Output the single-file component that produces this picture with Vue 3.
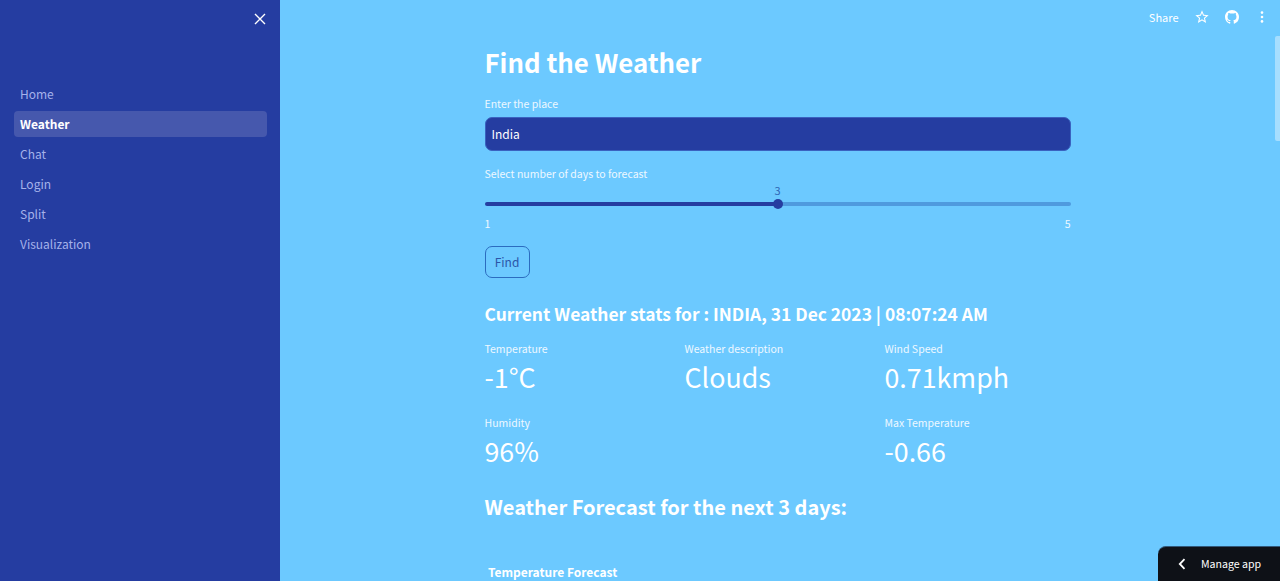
<template>
  <div class="app">
    <aside class="sidebar">
      <div class="side-top">
        <svg class="close" viewBox="0 0 12 12" width="12" height="12">
          <path d="M1 1l10 10M11 1L1 11" stroke="#fff" stroke-width="1.4" fill="none" />
        </svg>
      </div>
      <nav class="nav">
        <a
          v-for="item in navItems"
          :key="item"
          class="nav-item"
          :class="{ active: item === 'Weather' }"
        >{{ item }}</a>
      </nav>
    </aside>

    <main class="main">
      <header class="toolbar">
        <span class="share">Share</span>
        <svg class="star" viewBox="0 0 24 24" width="16" height="16" fill="#fff">
          <path d="M22 9.24l-7.19-.62L12 2 9.19 8.63 2 9.24l5.46 4.73L5.82 21 12 17.27 18.18 21l-1.63-7.03L22 9.24zM12 15.4l-3.76 2.27 1-4.28-3.32-2.88 4.38-.38L12 6.1l1.71 4.04 4.38.38-3.32 2.88 1 4.28L12 15.4z" />
        </svg>
        <svg class="github" viewBox="0 0 16 16" width="14" height="14" fill="#fff">
          <path d="M8 0C3.58 0 0 3.58 0 8c0 3.54 2.29 6.53 5.47 7.59.4.07.55-.17.55-.38 0-.19-.01-.82-.01-1.49-2.01.37-2.53-.49-2.69-.94-.09-.23-.48-.94-.82-1.13-.28-.15-.68-.52-.01-.53.63-.01 1.08.58 1.23.82.72 1.21 1.87.87 2.33.66.07-.52.28-.87.51-1.07-1.78-.2-3.64-.89-3.64-3.95 0-.87.31-1.59.82-2.15-.08-.2-.36-1.02.08-2.12 0 0 .67-.21 2.2.82.64-.18 1.32-.27 2-.27.68 0 1.36.09 2 .27 1.53-1.04 2.2-.82 2.2-.82.44 1.1.16 1.92.08 2.12.51.56.82 1.27.82 2.15 0 3.07-1.87 3.75-3.65 3.95.29.25.54.73.54 1.48 0 1.07-.01 1.93-.01 2.2 0 .21.15.46.55.38A8.013 8.013 0 0016 8c0-4.42-3.58-8-8-8z" />
        </svg>
        <svg class="kebab" viewBox="0 0 4 12" width="4" height="12" fill="#fff">
          <circle cx="2" cy="1.6" r="1.3" />
          <circle cx="2" cy="6" r="1.3" />
          <circle cx="2" cy="10.4" r="1.3" />
        </svg>
      </header>

      <div class="content">
        <h1 class="title">Find the Weather</h1>

        <label class="label first">Enter the place</label>
        <div class="input">India</div>

        <label class="label days">Select number of days to forecast</label>
        <div class="slider">
          <span class="slider-value" :style="{ left: pct + '%' }">{{ days }}</span>
          <div class="track">
            <div class="track-fill" :style="{ width: pct + '%' }"></div>
            <div class="track-rest"></div>
          </div>
          <span class="thumb" :style="{ left: pct + '%' }"></span>
        </div>
        <div class="ticks"><span>1</span><span>5</span></div>

        <button class="find">Find</button>

        <h3 class="heading">Current Weather stats for : INDIA, 31 Dec 2023 | 08:07:24 AM</h3>

        <div class="metrics">
          <div v-for="m in metrics" :key="m.label" class="metric" :class="m.cls">
            <div class="metric-label">{{ m.label }}</div>
            <div class="metric-value">{{ m.value }}</div>
          </div>
        </div>

        <h3 class="heading forecast">Weather Forecast for the next {{ days }} days:</h3>

        <div class="chart-title">Temperature Forecast</div>
      </div>

      <div class="scroll-thumb"></div>

      <div class="manage">
        <svg viewBox="0 0 8 12" width="8" height="12">
          <path d="M6.5 1.2L1.8 6l4.7 4.8" stroke="#fff" stroke-width="1.8" fill="none" />
        </svg>
        <span>Manage app</span>
      </div>
    </main>
  </div>
</template>

<script setup>
const navItems = ['Home', 'Weather', 'Chat', 'Login', 'Split', 'Visualization']

const days = 3
const pct = ((days - 1) / 4) * 100

const metrics = [
  { label: 'Temperature', value: '-1°C' },
  { label: 'Weather description', value: 'Clouds' },
  { label: 'Wind Speed', value: '0.71kmph' },
  { label: 'Humidity', value: '96%' },
  { label: 'Max Temperature', value: '-0.66', cls: 'col3' }
]
</script>

<style scoped>
.app {
  display: flex;
  height: 100vh;
  overflow: hidden;
  font-family: "Noto Sans CJK SC", "Noto Sans", sans-serif;
  color: #fff;
}

/* SIDEBAR */
.sidebar {
  width: 280px;
  flex-shrink: 0;
  background: #253da1;
  padding: 13px 13px 0 14px;
  box-sizing: border-box;
}

.side-top {
  display: flex;
  justify-content: flex-end;
  padding-right: 1px;
  height: 12px;
}

.close {
  display: block;
}

.nav {
  margin-top: 54px;
  display: flex;
  flex-direction: column;
}

.nav-item {
  height: 26px;
  margin: 2px 0;
  padding-left: 6px;
  line-height: 26px;
  font-size: 12px;
  color: #a5b2ea;
  border-radius: 4px;
}

.nav-item.active {
  background: #4658ad;
  color: #fff;
  font-weight: 700;
}

/* MAIN */
.main {
  position: relative;
  flex: 1;
  background: #6cc9ff;
  padding-right: 5px;
  min-width: 0;
}

.toolbar {
  height: 34px;
  display: flex;
  align-items: center;
  justify-content: flex-end;
  padding-right: 11px;
  font-size: 11px;
}

.share {
  margin-right: 15px;
}

.star {
  margin-right: 15.5px;
}

.github {
  margin-right: 21px;
}

.content {
  width: 586px;
  margin: 0 auto;
}

.title {
  margin: 8px 0 0;
  font-size: 25.8px;
  line-height: 40px;
  font-weight: 700;
}

.label {
  display: block;
  font-size: 10.5px;
  line-height: 16px;
  color: #eef8ff;
}

.label.first {
  margin-top: 14px;
}

.label.days {
  margin-top: 15px;
}

.input {
  margin-top: 5px;
  height: 34px;
  box-sizing: border-box;
  padding-left: 6px;
  line-height: 31px;
  font-size: 12px;
  background: #253da1;
  border: 1px solid #3a62c0;
  border-radius: 7px;
}

.slider {
  position: relative;
  margin-top: 7px;
  height: 22px;
}

.slider-value {
  position: absolute;
  top: -7px;
  transform: translateX(-50%);
  font-size: 11px;
  line-height: 16px;
  color: #2f66b5;
}

.track {
  position: absolute;
  top: 13px;
  left: 0;
  right: 0;
  display: flex;
  height: 4px;
  border-radius: 2px;
  overflow: hidden;
}

.track-fill {
  background: #253da1;
}

.track-rest {
  flex: 1;
  background: #4f9ade;
}

.thumb {
  position: absolute;
  top: 10px;
  width: 10px;
  height: 10px;
  margin-left: -5px;
  border-radius: 50%;
  background: #253da1;
}

.ticks {
  display: flex;
  justify-content: space-between;
  margin-top: 5px;
  font-size: 10.5px;
  line-height: 16px;
  color: #eef8ff;
}

.find {
  display: block;
  margin-top: 14px;
  width: 45px;
  height: 32px;
  padding: 0 0 2px;
  font: inherit;
  font-size: 12px;
  color: #2b55a8;
  background: transparent;
  border: 1px solid #2b6cc0;
  border-radius: 7px;
}

.heading {
  margin: 22px 0 0;
  font-size: 17.4px;
  line-height: 28px;
  font-weight: 700;
}

.metrics {
  display: grid;
  grid-template-columns: repeat(3, 1fr);
  column-gap: 14px;
  row-gap: 19px;
  margin-top: 13px;
}

.col3 {
  grid-column: 3;
}

.metric-label {
  font-size: 10.5px;
  line-height: 16px;
  color: #eef8ff;
}

.metric-value {
  padding-top: 1px;
  font-size: 26.8px;
  line-height: 38px;
}

.forecast {
  margin-top: 23px;
  font-size: 20px;
}

.chart-title {
  margin-top: 43px;
  padding-left: 3.5px;
  font-size: 12px;
  line-height: 16px;
  font-weight: 700;
}

/* OVERLAYS */
.scroll-thumb {
  position: absolute;
  top: 36px;
  right: 0;
  width: 5px;
  height: 105px;
  background: #a6deff;
  border-radius: 2px 0 0 2px;
}

.manage {
  position: absolute;
  right: 0;
  bottom: 0;
  width: 122px;
  height: 35px;
  box-sizing: border-box;
  padding: 0 0 1px 20px;
  display: flex;
  align-items: center;
  gap: 15px;
  background: #0e1117;
  border-top: 1px solid #31587a;
  border-radius: 8px 0 0 0;
  font-size: 10.6px;
  color: #fff;
}
</style>

<style>
body {
  margin: 0;
}
</style>
